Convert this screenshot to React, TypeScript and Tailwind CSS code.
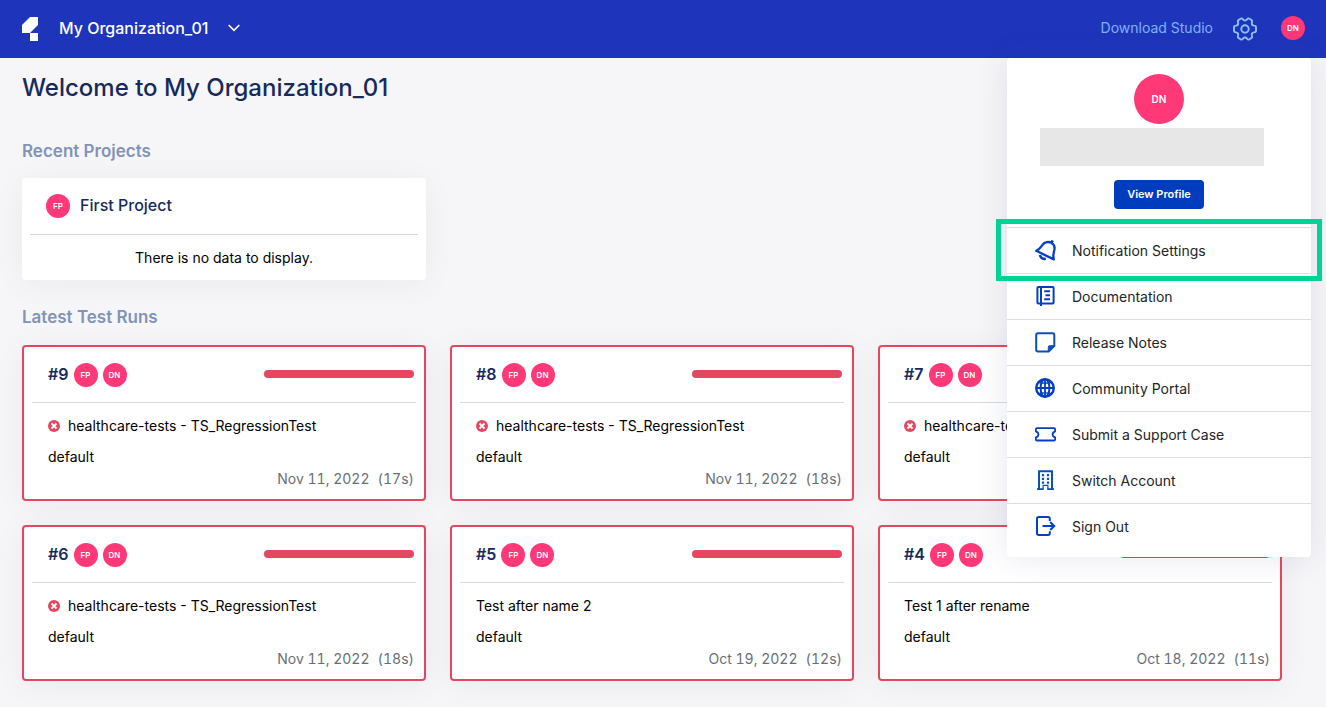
import type { ReactNode } from "react";

type Run = {
  id: number;
  title: string;
  failed?: boolean;
  profile: string;
  date: string;
  duration: string;
};

const runs: Run[] = [
  { id: 9, title: "healthcare-tests - TS_RegressionTest", failed: true, profile: "default", date: "Nov 11, 2022", duration: "(17s)" },
  { id: 8, title: "healthcare-tests - TS_RegressionTest", failed: true, profile: "default", date: "Nov 11, 2022", duration: "(18s)" },
  { id: 7, title: "healthcare-tests - TS_RegressionTest", failed: true, profile: "default", date: "Nov 11, 2022", duration: "(17s)" },
  { id: 6, title: "healthcare-tests - TS_RegressionTest", failed: true, profile: "default", date: "Nov 11, 2022", duration: "(18s)" },
  { id: 5, title: "Test after name 2", profile: "default", date: "Oct 19, 2022", duration: "(12s)" },
  { id: 4, title: "Test 1 after rename", profile: "default", date: "Oct 18, 2022", duration: "(11s)" },
];

function Glyph({ children }: { children: ReactNode }) {
  return (
    <svg
      viewBox="0 0 22 21"
      className="h-[21px] w-[22px] shrink-0 text-[#0540c2]"
      fill="none"
      stroke="currentColor"
      strokeWidth="2"
      aria-hidden="true"
    >
      {children}
    </svg>
  );
}

const menu: { label: string; icon: ReactNode; highlighted?: boolean }[] = [
  {
    label: "Notification Settings",
    highlighted: true,
    icon: (
      <Glyph>
        <path d="M1.2 10.8C4.5 9.6 5.8 7.3 7.6 4.8C9.6 2.2 13.5 1.2 16.3 2.7C19.4 4.4 20.1 7.6 19.1 11C18.3 14 18 16.6 18.8 19.4Z" strokeWidth="2.3" strokeLinejoin="round" />
        <path d="M16.4 2.8L17.7.4" strokeWidth="2.6" />
        <path d="M4.9 15C5.6 17.6 7.8 19.2 10.8 18.8" strokeWidth="2.6" />
      </Glyph>
    ),
  },
  {
    label: "Documentation",
    icon: (
      <Glyph>
        <rect x="2.4" y="1" width="16.2" height="16.6" rx="1" />
        <path d="M6 1V20" />
        <path d="M9.2 5.2H15M10.5 9.3H15M9.2 13.3H15" />
      </Glyph>
    ),
  },
  {
    label: "Release Notes",
    icon: (
      <Glyph>
        <path d="M19.3 14V3Q19.3 1.2 17.5 1.2H3Q1.2 1.2 1.2 3V17.7Q1.2 19.4 3 19.4H13.6L19.3 14Z" stroke="#0b4fb8" strokeLinejoin="round" />
        <path d="M13.3 19.5V15Q13.3 13.7 14.6 13.7H19.5Z" fill="#0b4fb8" stroke="#0b4fb8" strokeWidth="1" />
      </Glyph>
    ),
  },
  {
    label: "Community Portal",
    icon: (
      <Glyph>
        <circle cx="10" cy="10" r="8.8" strokeWidth="2.4" />
        <ellipse cx="10" cy="10" rx="4.4" ry="8.7" />
        <path d="M10 1V19M1.5 10H18.5" strokeWidth="1.8" />
        <path d="M3.2 4.2Q10 6 16.8 4.2M3.2 15.8Q10 14 16.8 15.8" strokeWidth="1.4" />
      </Glyph>
    ),
  },
  {
    label: "Submit a Support Case",
    icon: (
      <Glyph>
        <path
          d="M2 4.2H19Q20.1 4.2 20.1 5.3V7.3Q17.6 8.3 17.6 10.4Q17.6 12.4 20.1 13.4V15.4Q20.1 16.5 19 16.5H2Q.9 16.5 .9 15.4V13.4Q3.4 12.4 3.4 10.4Q3.4 8.3 .9 7.3V5.3Q.9 4.2 2 4.2Z"
          strokeWidth="1.8"
          strokeLinejoin="round"
        />
      </Glyph>
    ),
  },
  {
    label: "Switch Account",
    icon: (
      <Glyph>
        <g stroke="#0b4fb8">
          <path d="M4 19V1.2H17V19" />
          <path d="M2 19.2H8.6M12.4 19.2H19" strokeWidth="1.8" />
          <path d="M8.1 19.5V15.4H12.9V19.5" strokeWidth="1.2" />
          <path d="M8 4V6.2M13 4V6.2M8 7.8V10M13 7.8V10M8 11.6V13.8M13 11.6V13.8" strokeWidth="2.2" />
        </g>
      </Glyph>
    ),
  },
  {
    label: "Sign Out",
    icon: (
      <Glyph>
        <path d="M14.8 5V2.8Q14.8 1.1 13.1 1.1H3.8Q2 1.1 2 2.8V17.3Q2 19 3.8 19H13.1Q14.8 19 14.8 17.3V15.2" />
        <path d="M7.5 10H19M15.2 6L19.2 10L15.2 14" />
      </Glyph>
    ),
  },
];

function Avatar({ text }: { text: string }) {
  return (
    <span className="flex size-6 shrink-0 items-center justify-center rounded-full bg-[#ff3877] text-[8px] leading-none font-semibold text-white">
      {text}
    </span>
  );
}

function RunCard({ run }: { run: Run }) {
  return (
    <article className="rounded border-2 border-[#e4475f] bg-white px-2 shadow-[0_4px_32px_rgba(30,40,80,0.05)]">
      <header className="flex h-14 items-center border-b border-[#d5d9e0] pr-0.5 pl-4">
        <h3 className="mr-[5px] mb-0.5 text-base font-semibold text-[#182a5c]">#{run.id}</h3>
        <span className="flex gap-[5px]">
          <Avatar text="FP" />
          <Avatar text="DN" />
        </span>
        <span className="mb-0.5 ml-auto h-2 w-[150px] rounded-full bg-[#e4475f]" />
      </header>
      <div className="flex flex-col gap-[7px] pt-[11px] pr-0.5 pl-4 text-sm leading-6 text-black">
        <p className="flex items-center gap-2 whitespace-nowrap">
          {run.failed && (
            <svg viewBox="0 0 12 12" className="size-3 shrink-0" aria-label="Failed">
              <circle cx="6" cy="6" r="6" fill="#e4475f" />
              <path d="M3.5 3.5L8.5 8.5M8.5 3.5L3.5 8.5" stroke="#fff" strokeWidth="1.8" />
            </svg>
          )}
          {run.title}
        </p>
        <p>{run.profile}</p>
      </div>
      <p className="flex justify-end gap-2 pr-0.5 pb-2.5 text-sm leading-5 text-[#666f78] tabular-nums">
        <time>{run.date}</time>
        <span>{run.duration}</span>
      </p>
    </article>
  );
}

function AccountMenu() {
  return (
    <aside className="absolute top-full right-[15px] z-10 w-[304px] rounded bg-white pt-4 pb-2 shadow-[0_0_32px_rgba(50,60,120,0.12)]">
      <div className="flex flex-col items-center pb-[18px]">
        <span className="flex size-[50px] items-center justify-center rounded-full bg-[#ff3877] text-[10px] font-semibold text-white">
          DN
        </span>
        <span className="mt-1 mr-[14px] h-[38px] w-[224px] bg-[#e7e7e7]" />
        <button type="button" className="mt-3.5 h-[29px] w-[90px] rounded bg-[#003dbe] text-[11px] font-semibold text-white">
          View Profile
        </button>
      </div>
      <ul>
        {menu.map((item) => (
          <li key={item.label} className="relative border-t border-[#dcdee1]">
            <a href="#" className="flex h-[45px] items-center gap-[15px] pl-7 text-sm text-[#212529]">
              {item.icon}
              {item.label}
            </a>
            {item.highlighted && (
              <span className="pointer-events-none absolute -top-[9px] -right-[11px] -bottom-2 -left-[11px] z-10 border-5 border-[#00d395]" />
            )}
          </li>
        ))}
      </ul>
    </aside>
  );
}

export default function App() {
  return (
    <div className="min-h-screen bg-[#f6f6f8] font-['Inter',sans-serif]">
      <header className="relative flex h-[58px] items-center bg-[#1e35bb] pr-[21px] pl-[22px]">
        <svg viewBox="0 0 16 24" className="h-6 w-4" fill="#fff" aria-label="Home">
          <path d="M8 0H16V8L8 16H0V8ZM8 16H16V24H8Z" />
        </svg>
        <button type="button" className="ml-[21px] flex items-center gap-5 pb-0.5 text-base font-medium text-white">
          My Organization_01
          <svg viewBox="0 0 12 8" className="h-2 w-3" fill="none" stroke="currentColor" strokeWidth="1.7" aria-hidden="true">
            <path d="M.7 1L6 6.3L11.3 1" />
          </svg>
        </button>
        <div className="ml-auto flex items-center">
          <a href="#" className="pb-0.5 text-sm text-[#7fb2f5]">
            Download Studio
          </a>
          <button type="button" aria-label="Settings" className="ml-5 text-[#8fc0fa]">
            <svg viewBox="0 0 24 24" className="size-6" fill="none" stroke="currentColor" strokeWidth="1.9">
              <path
                strokeLinejoin="round"
                d="M7.6 1.8Q8.9.8 9.9 2.3Q12 4.6 14.1 2.3Q15.1.8 16.4 1.8L18.3 2.9Q19.6 3.6 18.9 5.4Q18.2 8.2 21.1 8.6Q23 8.8 23 10.3V13.7Q23 15.2 21.1 15.4Q18.2 15.8 18.9 18.6Q19.6 20.4 18.3 21.1L16.4 22.2Q15.1 23.2 14.1 21.7Q12 19.4 9.9 21.7Q8.9 23.2 7.6 22.2L5.7 21.1Q4.4 20.4 5.1 18.6Q5.8 15.8 2.9 15.4Q1 15.2 1 13.7V10.3Q1 8.8 2.9 8.6Q5.8 8.2 5.1 5.4Q4.4 3.6 5.7 2.9Z"
              />
              <circle cx="12" cy="12" r="3.7" />
            </svg>
          </button>
          <button type="button" aria-label="Account" className="ml-6 pb-0.5">
            <Avatar text="DN" />
          </button>
        </div>
        <AccountMenu />
      </header>

      <main className="pt-3 pr-11 pb-6 pl-[22px]">
        <h1 className="text-2xl leading-9 font-medium text-[#182a5c]">Welcome to My Organization_01</h1>

        <section className="mt-[33px]">
          <h2 className="text-[17px] leading-6 font-semibold text-[#8193b8]">Recent Projects</h2>
          <div className="mt-[15px] grid grid-cols-3 gap-6">
            <article className="rounded bg-white px-2 shadow-[0_4px_32px_rgba(30,40,80,0.05)]">
              <header className="flex h-[57px] items-center gap-2.5 border-b border-[#cdd5e4] pl-4">
                <Avatar text="FP" />
                <h3 className="mb-0.5 text-base font-medium text-[#182a5c]">First Project</h3>
              </header>
              <p className="py-3 text-center text-sm leading-[21px] text-black">There is no data to display.</p>
            </article>
          </div>
        </section>

        <section className="mt-[25px]">
          <h2 className="text-[17px] leading-6 font-semibold text-[#8193b8]">Latest Test Runs</h2>
          <div className="mt-4 grid grid-cols-3 gap-6">
            {runs.map((run) => (
              <RunCard key={run.id} run={run} />
            ))}
          </div>
        </section>
      </main>
    </div>
  );
}
